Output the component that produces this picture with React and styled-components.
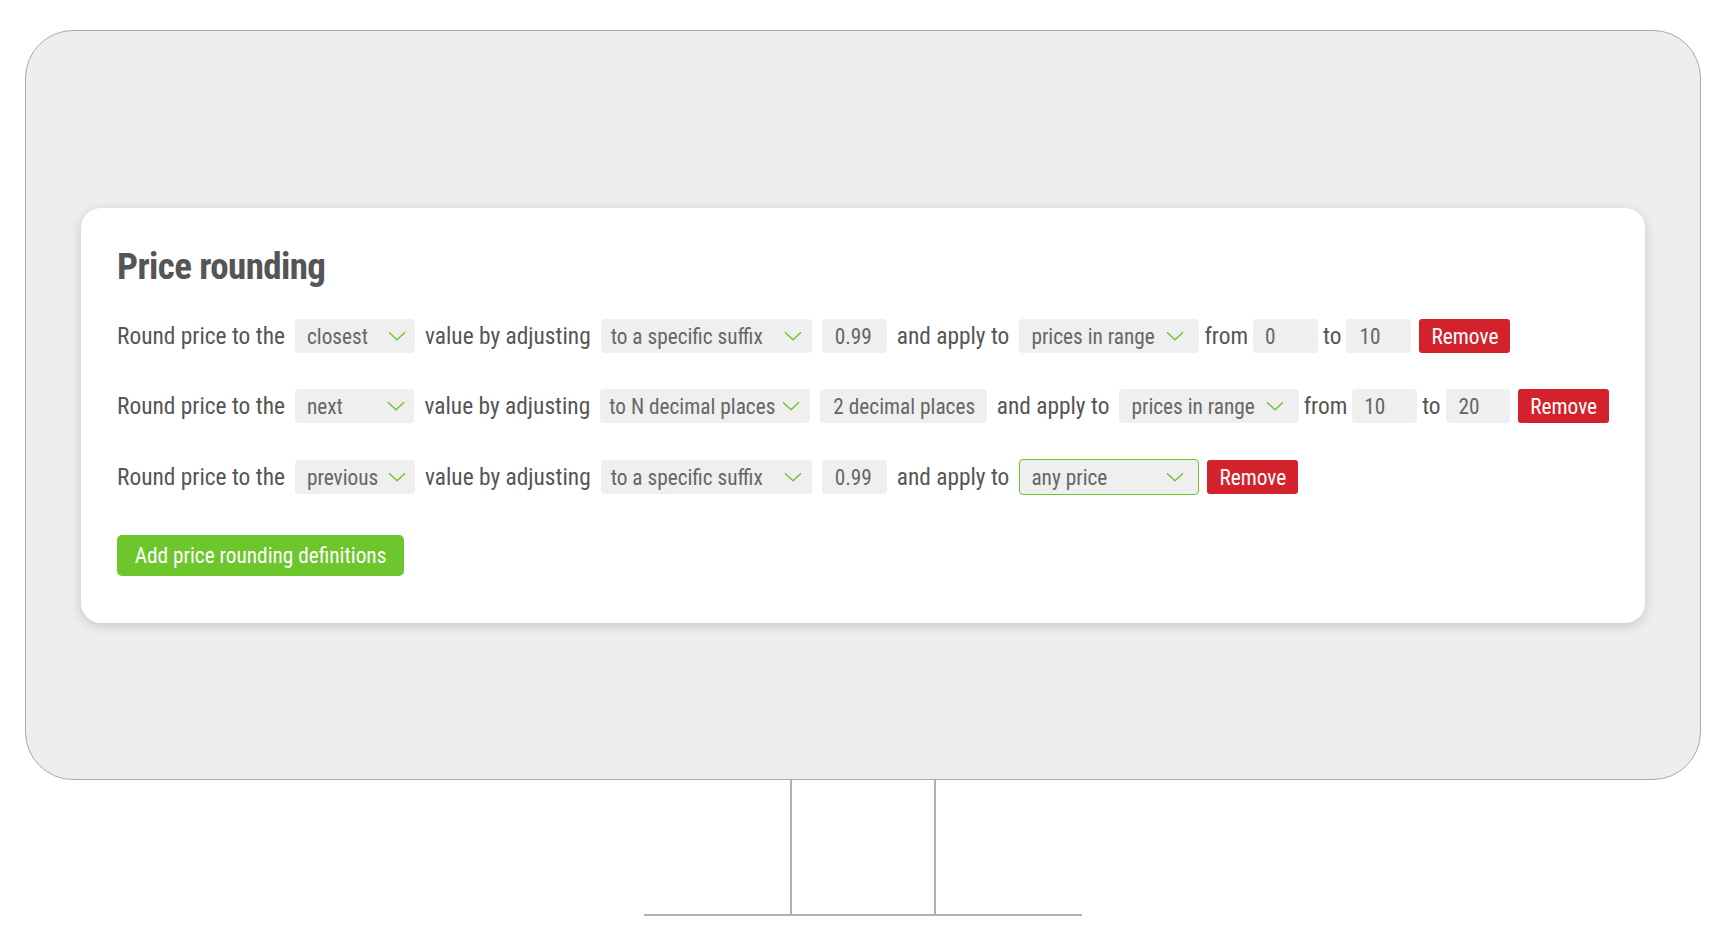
import React from "react";
import styled, { createGlobalStyle } from "styled-components";

const Global = createGlobalStyle`
  html, body { margin: 0; padding: 0; background: #ffffff; }
  body {
    font-family: Roboto, "Noto Sans", sans-serif;
    font-stretch: 75%;
    -webkit-font-smoothing: antialiased;
  }
  * { box-sizing: border-box; }
`;

const Page = styled.div`
  display: flex;
  flex-direction: column;
  align-items: center;
  padding-top: 30px;
`;

const Monitor = styled.div`
  width: 1676px;
  height: 750px;
  border: 1px solid #a9a9a9;
  border-radius: 48px;
  background: #edeeed;
  padding: 177px 55px 0;
`;

const Neck = styled.div`
  width: 146px;
  height: 134px;
  border-left: 2px solid #b2b2b2;
  border-right: 2px solid #b2b2b2;
`;

const Base = styled.div`
  width: 438px;
  border-top: 2px solid #b2b2b2;
`;

const Card = styled.section`
  background: #ffffff;
  border-radius: 20px;
  box-shadow: 0 3px 12px rgba(0, 0, 0, 0.17);
  padding: 37px 36px 47px;
`;

const Title = styled.h2`
  margin: 0 0 30px;
  font-size: 37px;
  line-height: 44px;
  letter-spacing: -0.6px;
  font-weight: 700;
  color: #555555;
`;

const Rows = styled.div`
  display: flex;
  flex-direction: column;
  gap: 36px;
`;

const Row = styled.div`
  display: flex;
  align-items: center;
`;

const Label = styled.span`
  font-size: 23.4px;
  line-height: 28px;
  color: #555555;
  white-space: nowrap;
  margin: 0 ${(p) => (p.$tight ? 0 : 5)}px;
  &:first-child { margin-left: 0; }
`;

const SelectBox = styled.div`
  display: flex;
  align-items: center;
  justify-content: space-between;
  width: ${(p) => p.$w}px;
  height: ${(p) => (p.$active ? 36 : 34)}px;
  margin: 0 5px;
  padding: 0 ${(p) => p.$pr}px 0 ${(p) => p.$pl}px;
  background: #eeefee;
  border: ${(p) => (p.$active ? "1px solid #6cc62c" : "none")};
  border-radius: 4px;
  font-size: 21.3px;
  color: #666666;
  white-space: nowrap;
`;

const Field = styled.div`
  display: flex;
  align-items: center;
  width: ${(p) => p.$w}px;
  height: 34px;
  margin: 0 5px;
  padding: 0 11px 0 ${(p) => p.$pl}px;
  background: #eeefee;
  border-radius: 4px;
  font-size: 21.3px;
  color: #666666;
  white-space: nowrap;
`;

const RemoveButton = styled.button`
  height: 34px;
  width: 91px;
  margin-left: 3px;
  border: none;
  border-radius: 3px;
  background: #d3222b;
  color: #ffffff;
  font-family: inherit;
  font-stretch: inherit;
  font-size: 21.3px;
  padding: 0;
  cursor: pointer;
`;

const AddButton = styled.button`
  align-self: flex-start;
  margin-top: 40px;
  height: 41px;
  width: 287px;
  border: none;
  border-radius: 5px;
  background: #6cc62c;
  color: #ffffff;
  font-family: inherit;
  font-stretch: inherit;
  font-size: 21.3px;
  padding: 0;
  cursor: pointer;
`;

const Body = styled.div`
  display: flex;
  flex-direction: column;
`;

const Chevron = () => (
  <svg width="18" height="10" viewBox="0 0 18 10" fill="none">
    <polyline points="1,1.2 9,8.8 17,1.2" stroke="#6cc62c" strokeWidth="1.4" strokeLinejoin="miter" />
  </svg>
);

const Select = ({ value, w, pl = 13, pr = 9, active }) => (
  <SelectBox $w={w} $pl={pl} $pr={pr} $active={active}>
    <span>{value}</span>
    <Chevron />
  </SelectBox>
);

const rules = [
  {
    dir: "closest",
    dirPad: 12,
    mode: "to a specific suffix",
    modePad: 10,
    amount: "0.99",
    amountW: 65,
    scope: "range",
    from: "0",
    to: "10",
  },
  {
    dir: "next",
    dirPad: 12,
    mode: "to N decimal places",
    modePad: 9,
    amount: "2 decimal places",
    amountW: 167,
    scope: "range",
    from: "10",
    to: "20",
  },
  {
    dir: "previous",
    dirPad: 12,
    mode: "to a specific suffix",
    modePad: 10,
    amount: "0.99",
    amountW: 65,
    scope: "any",
  },
];

export default function App() {
  return (
    <>
      <Global />
      <Page>
        <Monitor>
          <Card>
            <Title>Price rounding</Title>
            <Body>
              <Rows>
                {rules.map((r, i) => (
                  <Row key={i}>
                    <Label>Round price to the</Label>
                    <Select value={r.dir} w={120} pl={r.dirPad} pr={9} />
                    <Label>value by adjusting</Label>
                    <Select value={r.mode} w={211} pl={r.modePad} pr={10} />
                    <Field $w={r.amountW} $pl={13}>{r.amount}</Field>
                    <Label>and apply to</Label>
                    {r.scope === "range" ? (
                      <>
                        <Select value="prices in range" w={180} pl={12} pr={15} />
                        <Label $tight>from</Label>
                        <Field $w={65} $pl={12}>{r.from}</Field>
                        <Label $tight>to</Label>
                        <Field $w={65} $pl={13}>{r.to}</Field>
                      </>
                    ) : (
                      <Select value="any price" w={180} pl={11} pr={14} active />
                    )}
                    <RemoveButton>Remove</RemoveButton>
                  </Row>
                ))}
              </Rows>
              <AddButton>Add price rounding definitions</AddButton>
            </Body>
          </Card>
        </Monitor>
        <Neck />
        <Base />
      </Page>
    </>
  );
}
